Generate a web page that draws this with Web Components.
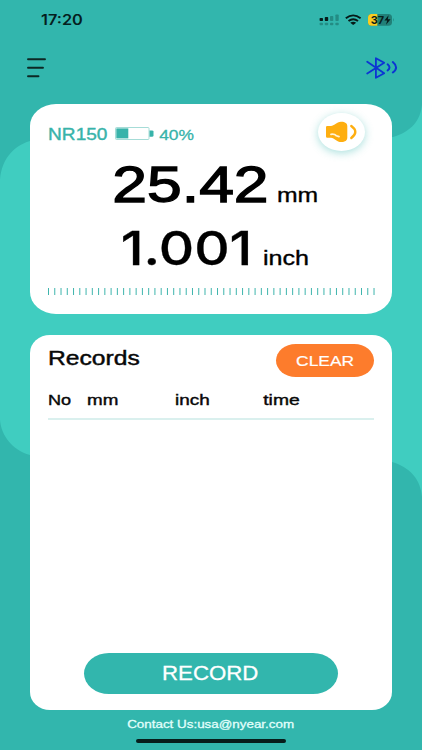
<!DOCTYPE html>
<html lang="en">
<head>
<meta charset="utf-8">
<title>NR150</title>
<style>
html,body{margin:0;height:100%;overflow:hidden}
</style>
</head>
<body>
<caliper-app></caliper-app>
<script>
const pen = document.createElement('canvas').getContext('2d');
class Base extends HTMLElement {
  render(html) { this.attachShadow({ mode: 'open' }).innerHTML = html; }
}

/* One line of extended-width lettering: its box is the ink width by the cap height. */
class WideText extends Base {
  connectedCallback() {
    if (this.shadowRoot) return;
    const a = n => this.getAttribute(n);
    const t = a('text'), w = +a('w'), cap = +a('cap'), st = +(a('stroke') || 0), wt = a('weight') || 400;
    const ff = a('face') || 'Liberation Sans', ratio = +(a('ratio') || 0.688);
    const fs = cap / ratio;
    pen.font = `${wt} ${fs}px "${ff}"`;
    const m = pen.measureText(t);
    const l = m.actualBoundingBoxLeft, ink = m.actualBoundingBoxLeft + m.actualBoundingBoxRight;
    const s = w / (ink + st);
    this.render(`<style>:host{display:block;flex:none;width:${w}px;height:${cap}px}svg{display:block;overflow:visible}
      text{font:${wt} ${fs}px "${ff}","Liberation Sans",sans-serif;fill:currentColor;stroke:currentColor;stroke-width:${st}px}</style>
      <svg width="${w}" height="${cap}"><text transform="translate(${(l + st / 2) * s} ${cap}) scale(${s} 1)" textLength="${m.width}">${t}</text></svg>`);
  }
}
customElements.define('wide-text', WideText);

class PageBackdrop extends Base {
  connectedCallback() {
    this.render(`<style>:host{display:block}svg{display:block}</style>
    <svg width="422" height="750"><rect width="422" height="750" fill="#32b6ad"/>
    <path fill="#40cdc0" d="M0 183C0 162 12 146 30 141L60 138H370L393 137C411 132 421 120 422 104V497C421 480 410 467 392 462L360 459H60L30 455C12 450 1 435 0 420Z"/></svg>`);
  }
}
customElements.define('page-backdrop', PageBackdrop);

class StatusBar extends Base {
  connectedCallback() {
    this.render(`<style>:host{display:flex;height:40px;padding:0 28px 0 41px;align-items:flex-start;justify-content:space-between;color:#05201e}
    wide-text{margin-top:15px}svg{display:block;margin-top:13px}
    svg text{font:700 11px Inter,sans-serif;fill:#08201a}</style>
    <wide-text text="17:20" w="41.5" cap="10.2" face="Inter" ratio=".727" weight="600"></wide-text>
    <svg width="75" height="14" viewBox="319 13 75 14">
      <g fill="#071c1a"><rect x="319.6" y="18" width="3.4" height="3" rx=".7"/><rect x="324.8" y="17" width="3.4" height="4" rx=".7"/></g>
      <g fill="#238c84"><rect x="330" y="16" width="3.3" height="5" rx=".8"/><rect x="335.4" y="14.5" width="3.3" height="6.6" rx=".8"/>
      <rect x="319.6" y="22.8" width="3.4" height="2.4" rx=".8"/><rect x="324.8" y="22.8" width="3.4" height="2.4" rx=".8"/><rect x="330" y="22.8" width="3.3" height="2.4" rx=".8"/><rect x="335.4" y="22.8" width="3.3" height="2.4" rx=".8"/></g>
      <g fill="none" stroke="#061a18" stroke-width="1.9"><path d="M345.8 18.2Q353.2 12.6 360.6 18.2M348.5 21Q353.2 17.4 358 21"/></g>
      <path d="M350.2 22.7Q353.2 20.7 356.2 22.7L353.2 25Z" fill="#061a18"/>
      <clipPath id="b"><rect x="368" y="14" width="24" height="11.8" rx="3.6"/></clipPath>
      <g clip-path="url(#b)"><rect x="368" y="14" width="24" height="12" fill="#218078"/><rect x="368" y="14" width="9.3" height="12" fill="#f9cc20"/></g>
      <path d="M393 18q1.6 1.8 0 3.6z" fill="#238c84"/>
      <text x="370.8" y="24" textLength="13.4" lengthAdjust="spacingAndGlyphs">37</text>
      <path d="M388.6 15.2L384.4 20.6H387.2L386 24.8L390.6 19.2H387.8Z" fill="#061a18"/>
    </svg>`);
  }
}
customElements.define('status-bar', StatusBar);

class NavBar extends Base {
  connectedCallback() {
    this.render(`<style>:host{display:flex;height:64px;padding:0 24px 0 27px;justify-content:space-between;align-items:flex-start}svg{display:block;margin-top:16px;overflow:visible}</style>
    <svg width="20" height="24" viewBox="27 56 20 24" stroke="#0c2825" stroke-width="1.9" stroke-linecap="round"><path d="M28 59.2H45M28 67.7H43M28 76.2H38.5"/></svg>
    <svg width="32" height="24" viewBox="366 56 32 24" fill="none" stroke="#0c35d3" stroke-width="1.8" stroke-linecap="round" stroke-linejoin="round"><path d="M367.2 61.8L384.2 73.2L375.9 77.8V58.2L384.2 62.7L367.2 73.6"/><path stroke-width="2" d="M387.6 64.3Q391.4 67.5 387.6 70.5M392.8 62.1Q399.4 67.5 392.8 72.5"/></svg>`);
  }
}
customElements.define('nav-bar', NavBar);

class SurfaceCard extends Base {
  connectedCallback() {
    this.render(`<style>:host{display:flex;flex-direction:column;box-sizing:border-box;background:#fff;padding:0 18px;position:relative}</style><slot></slot>`);
  }
}
customElements.define('surface-card', SurfaceCard);

class PillButton extends Base {
  connectedCallback() {
    this.render(`<style>:host{display:flex;align-items:center;justify-content:center;color:#fff;flex:none}</style><slot></slot>`);
  }
}
customElements.define('pill-button', PillButton);

class BatteryLevel extends Base {
  connectedCallback() {
    this.render(`<style>:host,svg{display:block}</style><svg width="39" height="14" viewBox="0 0 39 14"><rect x=".5" y=".9" width="33.5" height="12" rx="1" fill="#fff" stroke="#8fd3cd" stroke-width=".8"/><rect x="1.3" y="1.8" width="12" height="10" fill="#38b3aa"/><path d="M34.5 3.8H37q1.5 0 1.5 1.2V9q0 1.2-1.5 1.2h-2.5z" fill="#38b3aa"/></svg>`);
  }
}
customElements.define('battery-level', BatteryLevel);

class SoundButton extends Base {
  connectedCallback() {
    this.render(`<style>:host{display:block;width:47px;height:38px;border-radius:50%;background:#fff;box-shadow:0 2px 8px rgba(50,182,173,.42)}svg{display:block}</style>
    <svg width="47" height="38" viewBox="318 113 47 38"><path fill="#feae10" d="M327.3 125.9H331C334 125.8 336.5 122 341 121.7C345 121.6 347.3 123.4 347.3 126V137.5C347.3 140.5 345 142 341.5 142C336.5 142 334.5 138 331 137.7H327.3Q326 137.7 326 136.5V127Q326 125.9 327.3 125.9Z"/>
    <path d="M331 134.3Q334.5 133.8 336.5 135.8L339 136.6" fill="none" stroke="#fff3d8" stroke-width="1.8" stroke-linecap="round"/>
    <path d="M351.3 126Q359.3 131.8 351.3 138" fill="none" stroke="#feae10" stroke-width="2.4" stroke-linecap="round"/></svg>`);
  }
}
customElements.define('sound-button', SoundButton);

class ReadingPanel extends Base {
  connectedCallback() {
    this.render(`<style>:host{display:block;color:#000}
    surface-card{height:210px;border-radius:26px/22px}
    .row{display:flex;align-items:flex-end;justify-content:flex-start}
    .id{height:35.8px;color:#38b3aa;padding-left:1px}.id battery-level{margin:0 4.5px 0 8.4px;transform:translateY(.6px)}
    .mm{height:62.2px;padding-left:66px;gap:11px}.in{height:63px;padding-left:75px;gap:15.6px}
    sound-button{position:absolute;top:9px;right:27px}
    svg{display:block;margin-top:23px}</style>
    <surface-card>
      <div class="row id"><wide-text text="NR150" w="58" cap="11.9" stroke=".4"></wide-text><battery-level></battery-level><wide-text text="40%" w="35" cap="10.2" stroke=".3"></wide-text></div>
      <div class="row mm"><wide-text text="25.42" w="153" cap="34.6" stroke="1.3"></wide-text><wide-text text="mm" w="39" cap="14.2" stroke=".35"></wide-text></div>
      <div class="row in"><wide-text text="1.001" w="125.6" cap="34" stroke=".3" face="Inter" ratio=".727" weight="500"></wide-text><wide-text text="inch" w="43.8" cap="13.8" stroke=".35"></wide-text></div>
      <svg width="327" height="7"><path d="M0 3.5H327" stroke="#3fb5ad" stroke-width="7" stroke-dasharray="1 5.26"/></svg>
      <sound-button></sound-button>
    </surface-card>`);
  }
}
customElements.define('reading-panel', ReadingPanel);

class RecordsPanel extends Base {
  connectedCallback() {
    this.render(`<style>:host{display:block;color:#080808}
    surface-card{height:375px;border-radius:20px/18px}
    .head{display:flex;justify-content:space-between;height:43px}
    .head>wide-text{margin:15.8px 0 0 1px}
    .clear{width:98px;height:33.4px;margin-top:9px;border-radius:20px/16.7px;background:#fd7c2c}
    .cols{display:grid;grid-template-columns:39px 88.3px 87px 1fr;align-items:end;height:27.6px;padding-left:.7px}
    .rule{height:2px;background:#daf0ee;margin-top:12.4px}
    .rec{width:253.5px;height:41px;border-radius:25px/20.5px;background:#32b6ad;margin:auto auto 16px;align-self:center}</style>
    <surface-card>
      <div class="head"><wide-text text="Records" w="90.8" cap="14" stroke=".45"></wide-text><pill-button class="clear"><wide-text text="CLEAR" w="58" cap="10.6" stroke=".2"></wide-text></pill-button></div>
      <div class="cols"><wide-text text="No" w="22" cap="10.3" stroke=".4"></wide-text><wide-text text="mm" w="30" cap="10.3" stroke=".4"></wide-text><wide-text text="inch" w="33.6" cap="10.3" stroke=".4"></wide-text><wide-text text="time" w="36.6" cap="10.3" stroke=".4"></wide-text></div>
      <div class="rule"></div>
      <pill-button class="rec"><wide-text text="RECORD" w="95.5" cap="13.4" stroke=".25"></wide-text></pill-button>
    </surface-card>`);
  }
}
customElements.define('records-panel', RecordsPanel);

class CaliperApp extends Base {
  connectedCallback() {
    this.render(`<style>:host{display:grid;width:422px;height:750px;overflow:hidden}
    page-backdrop,main{grid-area:1/1}
    main{display:flex;flex-direction:column;width:422px;z-index:1}
    reading-panel{margin:0 30px 21px}records-panel{margin:0 30px}
    footer{display:flex;flex-direction:column;align-items:center;color:#e2fffc;padding-top:9.9px}
    .home{width:150px;height:4.4px;border-radius:3px;background:#071d1b;margin-top:11px}</style>
    <page-backdrop></page-backdrop>
    <main><status-bar></status-bar><nav-bar></nav-bar><reading-panel></reading-panel><records-panel></records-panel>
    <footer><wide-text text="Contact Us:usa@nyear.com" w="167.5" cap="8.1" stroke=".3"></wide-text><div class="home"></div></footer></main>`);
  }
}
customElements.define('caliper-app', CaliperApp);
</script>
</body>
</html>
